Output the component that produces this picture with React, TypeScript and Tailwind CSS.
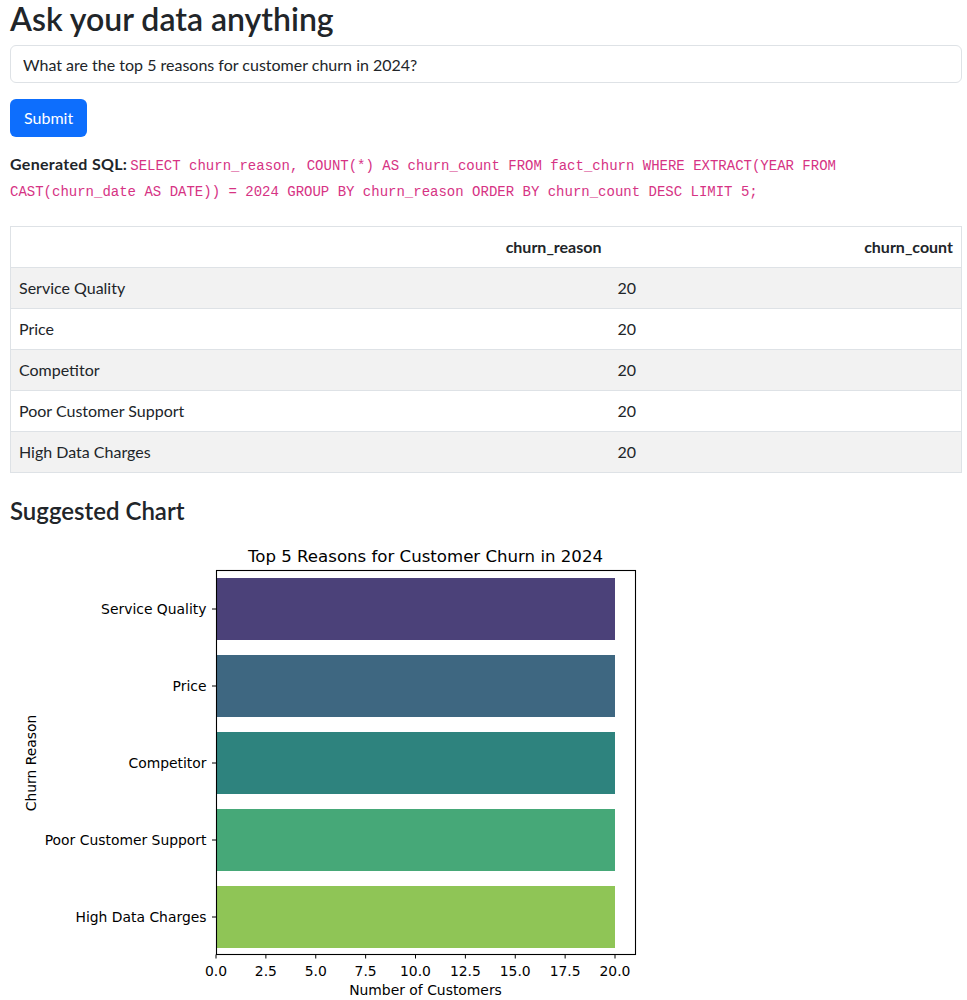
const rows = [
  { reason: "Service Quality", count: 20 },
  { reason: "Price", count: 20 },
  { reason: "Competitor", count: 20 },
  { reason: "Poor Customer Support", count: 20 },
  { reason: "High Data Charges", count: 20 },
];

const barColors = ["#4b4179", "#3e6781", "#2e837e", "#46a878", "#8fc556"];

function ChurnChart() {
  const left = 216;
  const perUnit = 19.95;
  const ticks = [0, 2.5, 5, 7.5, 10, 12.5, 15, 17.5, 20];
  const font = "'DejaVu Sans', sans-serif";

  return (
    <svg width={660} height={470} viewBox="0 530 660 470" className="block">
      <text x={425.5} y={562} textAnchor="middle" fontSize={16.6} fontFamily={font} fill="#000">
        Top 5 Reasons for Customer Churn in 2024
      </text>

      {rows.map((r, i) => {
        const center = 609 + i * 77;
        return (
          <g key={r.reason}>
            <rect x={left} y={center - 31} width={r.count * perUnit} height={62} fill={barColors[i]} />
            <line x1={212} x2={left} y1={center} y2={center} stroke="#000" strokeWidth={1} />
            <text x={206.5} y={center + 5} textAnchor="end" fontSize={13.9} fontFamily={font} fill="#000">
              {r.reason}
            </text>
          </g>
        );
      })}

      <rect x={216.5} y={570.5} width={419} height={384} fill="none" stroke="#000" strokeWidth={1.1} />

      {ticks.map((t) => {
        const x = left + t * perUnit;
        return (
          <g key={t}>
            <line x1={x} x2={x} y1={954.5} y2={958.5} stroke="#000" strokeWidth={1} />
            <text x={x} y={975.5} textAnchor="middle" fontSize={13.9} fontFamily={font} fill="#000">
              {t.toFixed(1)}
            </text>
          </g>
        );
      })}

      <text x={425.5} y={995} textAnchor="middle" fontSize={13.9} fontFamily={font} fill="#000">
        Number of Customers
      </text>
      <text
        x={0}
        y={0}
        transform="translate(36 763) rotate(-90)"
        textAnchor="middle"
        fontSize={13.9}
        fontFamily={font}
        fill="#000"
      >
        Churn Reason
      </text>
    </svg>
  );
}

export default function App() {
  return (
    <div className="h-screen overflow-hidden bg-white pl-[10px] pr-[5px] text-[#212529] font-['Lato','Noto_Sans',sans-serif]">
      <h1 className="text-[32px] leading-[38px] font-semibold mb-[7px]">Ask your data anything</h1>

      <input
        type="text"
        defaultValue="What are the top 5 reasons for customer churn in 2024?"
        className="block w-full h-[38px] rounded-[6px] border border-[#dee2e6] px-3 text-base text-[#212529] outline-none"
      />

      <button className="mt-4 h-[38px] rounded-[6px] bg-[#0d6efd] px-[14px] text-base text-white">
        Submit
      </button>

      {/* Generated query, wrapped where the reference wraps it */}
      <div className="mt-[14px] leading-[26px]">
        <div className="flex items-baseline">
          <strong className="font-bold tracking-[0.3px] mr-[3px]">Generated SQL:</strong>
          <code className="font-['Liberation_Mono',monospace] text-[14px] leading-[26px] text-[#d63384]">
            SELECT churn_reason, COUNT(*) AS churn_count FROM fact_churn WHERE EXTRACT(YEAR FROM
          </code>
        </div>
        <code className="block font-['Liberation_Mono',monospace] text-[14px] leading-[26px] text-[#d63384]">
          CAST(churn_date AS DATE)) = 2024 GROUP BY churn_reason ORDER BY churn_count DESC LIMIT 5;
        </code>
      </div>

      {/* Results */}
      <table className="mt-[21px] w-full border-collapse border border-[#dee2e6] text-base">
        <thead>
          <tr className="border-b border-[#dee2e6]">
            <th className="w-[599px] h-[41px] px-2 text-right font-bold">churn_reason</th>
            <th className="h-[41px] px-2 text-right font-bold">churn_count</th>
          </tr>
        </thead>
        <tbody>
          {rows.map((r, i) => (
            <tr
              key={r.reason}
              className={i % 2 === 0 ? "border-b border-[#dee2e6] bg-[#f2f2f2]" : "border-b border-[#dee2e6] bg-white"}
            >
              <td className="h-[41px] px-2">{r.reason}</td>
              <td className="h-[41px] px-2">{r.count}</td>
            </tr>
          ))}
        </tbody>
      </table>

      <h3 className="mt-[23px] text-[24px] leading-[29px] font-semibold">Suggested Chart</h3>

      <div className="mt-[5px] -ml-[10px]">
        <ChurnChart />
      </div>
    </div>
  );
}
